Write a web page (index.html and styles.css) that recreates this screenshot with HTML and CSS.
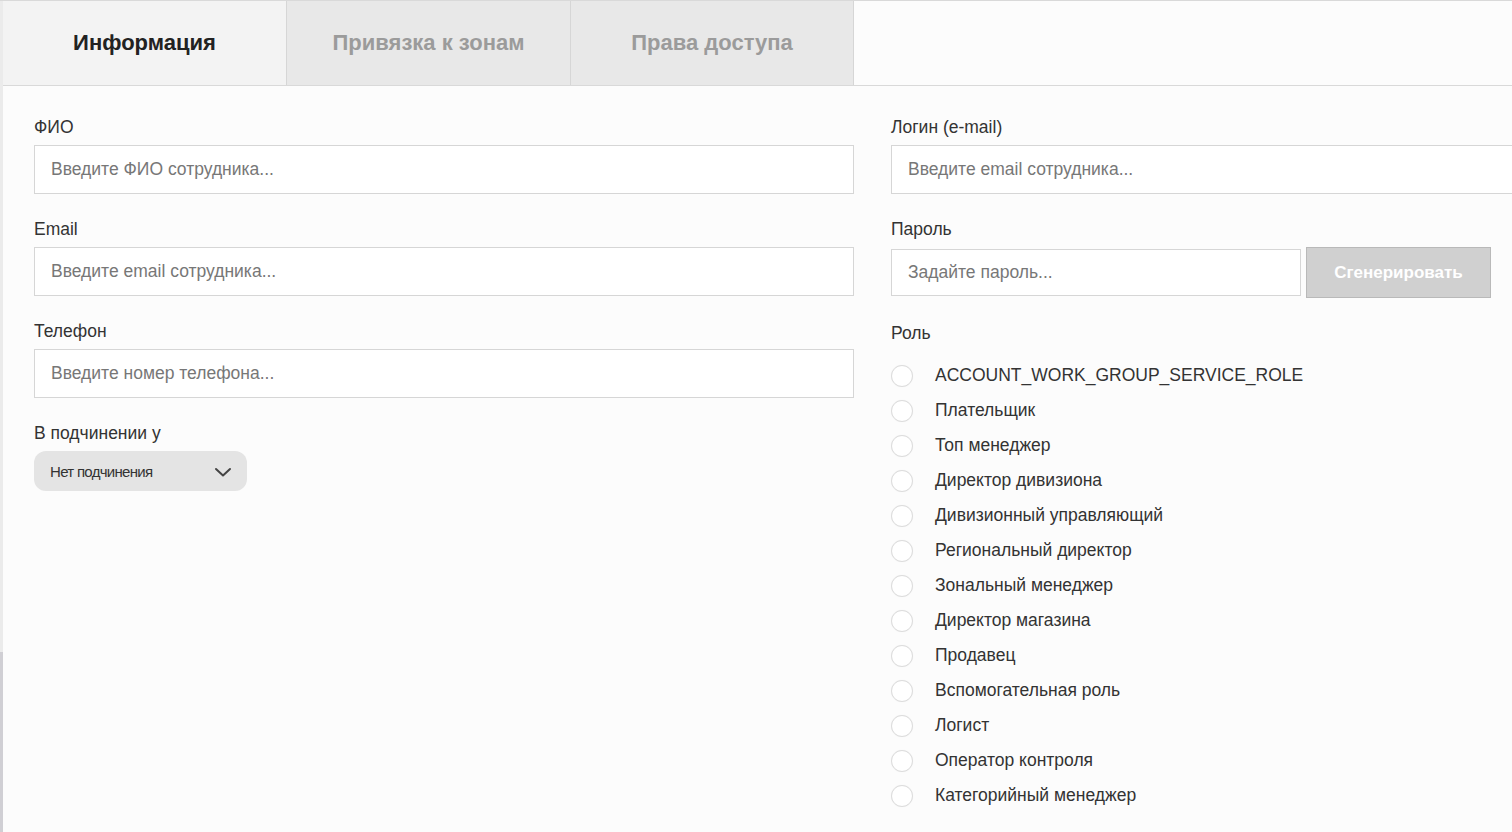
FILE: index.html
```html
<!DOCTYPE html>
<html lang="ru">
<head>
<meta charset="utf-8">
<title>Сотрудник</title>
<link rel="stylesheet" href="styles.css">
</head>
<body>
<div class="page">
  <div class="rail"><div class="rail-top"></div><div class="rail-bottom"></div></div>
  <div class="main">
    <div class="tabs">
      <div class="tab active">Информация</div>
      <div class="tab">Привязка к зонам</div>
      <div class="tab">Права доступа</div>
    </div>
    <div class="form">
      <div class="col">
        <div class="field">
          <label class="label">ФИО</label>
          <input class="input" type="text" placeholder="Введите ФИО сотрудника...">
        </div>
        <div class="field">
          <label class="label">Email</label>
          <input class="input" type="text" placeholder="Введите email сотрудника...">
        </div>
        <div class="field">
          <label class="label">Телефон</label>
          <input class="input" type="text" placeholder="Введите номер телефона...">
        </div>
        <div class="field">
          <label class="label">В подчинении у</label>
          <div class="select">
            <span class="select-text">Нет подчинения</span>
            <svg class="chev" width="18" height="12" viewBox="0 0 18 12"><path d="M2 3 L9 9.5 L16 3" fill="none" stroke="#444" stroke-width="2" stroke-linecap="round" stroke-linejoin="round"/></svg>
          </div>
        </div>
      </div>
      <div class="col">
        <div class="field">
          <label class="label">Логин (e-mail)</label>
          <input class="input" type="text" placeholder="Введите email сотрудника...">
        </div>
        <div class="field">
          <label class="label">Пароль</label>
          <div class="pass-row">
            <input class="input pass" type="text" placeholder="Задайте пароль...">
            <button class="gen">Сгенерировать</button>
          </div>
        </div>
        <div class="field role">
          <label class="label">Роль</label>
          <ul class="radios">
            <li><span class="circle"></span>ACCOUNT_WORK_GROUP_SERVICE_ROLE</li>
            <li><span class="circle"></span>Плательщик</li>
            <li><span class="circle"></span>Топ менеджер</li>
            <li><span class="circle"></span>Директор дивизиона</li>
            <li><span class="circle"></span>Дивизионный управляющий</li>
            <li><span class="circle"></span>Региональный директор</li>
            <li><span class="circle"></span>Зональный менеджер</li>
            <li><span class="circle"></span>Директор магазина</li>
            <li><span class="circle"></span>Продавец</li>
            <li><span class="circle"></span>Вспомогательная роль</li>
            <li><span class="circle"></span>Логист</li>
            <li><span class="circle"></span>Оператор контроля</li>
            <li><span class="circle"></span>Категорийный менеджер</li>
          </ul>
        </div>
      </div>
    </div>
  </div>
</div>
</body>
</html>
```
FILE: styles.css
```css
html, body {
  margin: 0;
  padding: 0;
  width: 1512px;
  height: 832px;
  overflow: hidden;
  background: #fcfcfc;
  font-family: "Liberation Sans", Arial, sans-serif;
  color: #333;
}
.page {
  display: flex;
  height: 832px;
  border-top: 1px solid #d9d9d9;
  box-sizing: border-box;
}
.rail {
  width: 3px;
  flex: 0 0 3px;
  display: flex;
  flex-direction: column;
}
.rail-top {
  height: 651px;
  background: #ebebeb;
}
.rail-bottom {
  flex: 1;
  background: #d0cfd4;
}
.main {
  flex: 1;
  min-width: 0;
  overflow: hidden;
}
.tabs {
  display: flex;
  height: 84px;
  border-bottom: 1px solid #d9d9d9;
}
.tab {
  width: 283px;
  border-right: 1px solid #d6d6d6;
  background: #e8e8e8;
  display: flex;
  align-items: center;
  justify-content: center;
  font-size: 22px;
  font-weight: bold;
  color: #9b9b9b;
}
.tab:last-child {
  width: 282px;
}
.tab.active {
  background: #f3f3f3;
  color: #222;
}
.form {
  display: grid;
  grid-template-columns: 820px 820px;
  column-gap: 37px;
  padding: 31px 0 0 31px;
  overflow: hidden;
}
.col {
  display: flex;
  flex-direction: column;
  gap: 25px;
}
.field {
  display: flex;
  flex-direction: column;
  gap: 7px;
}
.label {
  font-size: 17.5px;
  line-height: 21px;
  color: #333;
}
.input {
  height: 49px;
  box-sizing: border-box;
  border: 1px solid #d6d6d6;
  background: #fff;
  padding: 0 16px;
  font-family: inherit;
  font-size: 17.5px;
  color: #333;
  outline: none;
}
.input::placeholder {
  color: #777;
}
.select {
  width: 213px;
  height: 40px;
  box-sizing: border-box;
  background: #e4e4e4;
  border-radius: 12px;
  display: flex;
  align-items: center;
  justify-content: space-between;
  padding: 0 15px 0 16px;
}
.select-text {
  font-size: 15px;
  letter-spacing: -0.7px;
  color: #333;
}
.chev {
  display: block;
  margin-top: 2px;
}
.pass-row {
  display: flex;
  align-items: center;
  gap: 5px;
}
.input.pass {
  width: 410px;
  height: 47px;
}
.gen {
  width: 185px;
  height: 51px;
  box-sizing: border-box;
  background: #d0d0d0;
  border: 1px solid #b9b9b9;
  color: #fff;
  font-family: inherit;
  font-size: 17px;
  font-weight: bold;
  padding: 0;
}
.role {
  gap: 14px;
}
.radios {
  list-style: none;
  margin: 0;
  padding: 0;
}
.radios li {
  height: 35px;
  display: flex;
  align-items: center;
  font-size: 17.5px;
  color: #333;
}
.circle {
  width: 22px;
  height: 22px;
  box-sizing: border-box;
  border: 1px solid #dcdcdc;
  border-radius: 50%;
  background: #fff;
  box-shadow: 0 0 1px rgba(0,0,0,0.08);
  margin-right: 22px;
  flex: 0 0 22px;
}
```
